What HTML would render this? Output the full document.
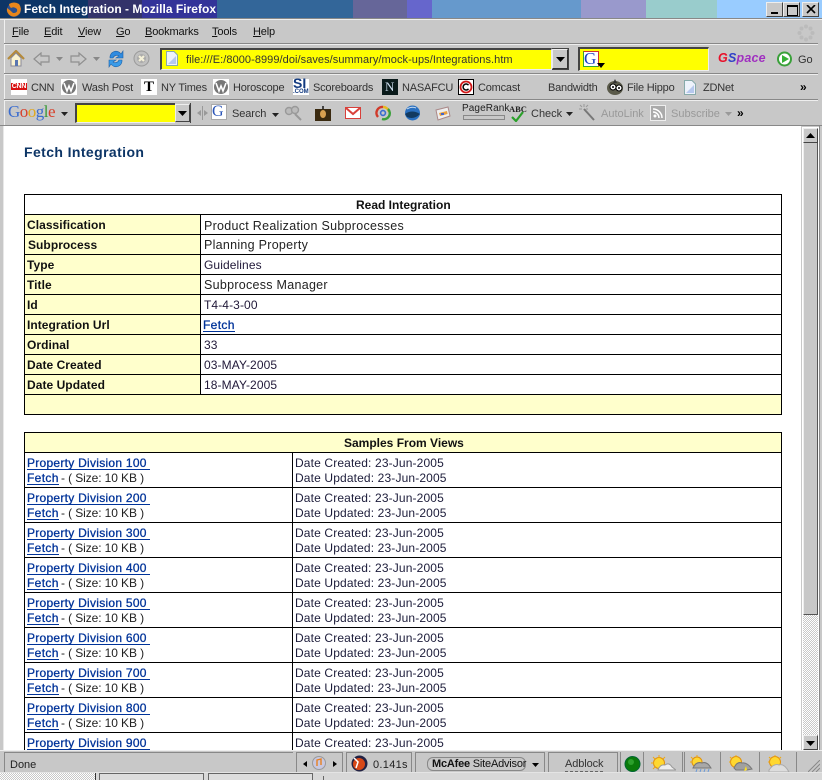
<!DOCTYPE html>
<html><head><meta charset="utf-8"><title>Fetch Integration - Mozilla Firefox</title>
<style>
html,body{margin:0;padding:0;width:822px;height:780px;overflow:hidden;background:#c8c8c8;font-family:"Liberation Sans",sans-serif;font-size:12px;color:#000}
div,svg,a,span.a{position:absolute}
.b{left:0;right:0}
.t{white-space:nowrap;line-height:14px;height:14px}
.m{font-size:11px;color:#111;top:25px;letter-spacing:-.15px}
.bm{top:81px;font-size:11px;color:#333;letter-spacing:-.2px}
.l{position:absolute;background:#000}
.k{font-weight:bold;left:27px;letter-spacing:.05px;color:#111}
.v{left:204px;letter-spacing:.1px;color:#201838}
.v2{font-size:12.5px;letter-spacing:.28px;color:#222}
.c{color:#1c1c3a;left:295px;letter-spacing:.14px}
.d{color:#003399;left:27px;font-weight:normal;letter-spacing:.27px;-webkit-text-stroke:.3px #003399;border-bottom:1px solid #003399;height:13px;line-height:15px}
.f{color:#003399;left:27px;letter-spacing:.35px;-webkit-text-stroke:.3px #003399;border-bottom:1px solid #003399;height:12px;line-height:13px}
.s{left:61px;letter-spacing:-.1px;color:#222}
.sep{background:#888;height:1px;left:4px;right:4px}
.sepw{background:#eee;height:1px;left:4px;right:4px}
.ye{background:#ffff00}
.sb{background:#c8c8c8;border-top:1px solid #eee;border-left:1px solid #eee;border-right:1px solid #444;border-bottom:1px solid #444;box-sizing:border-box}
</style></head><body>
<!-- title bar -->
<div style="left:0;top:0;width:822px;height:18px;background:linear-gradient(90deg,#0d3566 0,#0d3566 88px,#33336a 88px,#33336a 142px,#333399 142px,#333399 217px,#336699 217px,#336699 353px,#666699 353px,#666699 407px,#6666cc 407px,#6666cc 432px,#6699cc 432px,#6699cc 581px,#9999cc 581px,#9999cc 646px,#99cccc 646px,#99cccc 717px,#99ccff 717px)"></div>
<svg style="left:5px;top:1px" width="18" height="17" viewBox="0 0 18 17"><circle cx="9" cy="9" r="7" fill="#2a4f8f"/><path d="M4 3 Q9 0 14 3 Q17 7 15 12 Q11 17 6 15 Q1 12 2 7 Q5 9 8 12 Q13 12 12 8 Q9 5 6 7 Q4 5 4 3Z" fill="#e8861c"/></svg>
<div class="t" style="left:24px;top:2px;color:#fff;font-weight:bold;font-size:12px;letter-spacing:.02px">Fetch Integration - Mozilla Firefox</div>
<div class="sb" style="left:766px;top:2px;width:17px;height:15px"><div style="left:4px;top:9px;width:7px;height:2px;background:#000"></div></div>
<div class="sb" style="left:783px;top:2px;width:17px;height:15px"><div style="left:3px;top:2px;width:9px;height:8px;border:1px solid #000;border-top-width:2px"></div></div>
<div class="sb" style="left:802px;top:2px;width:17px;height:15px"><svg style="left:3px;top:2px" width="10" height="9"><path d="M1 0L9 8M9 0L1 8" stroke="#000" stroke-width="1.6"/></svg></div>
<div style="left:0;top:18px;width:822px;height:1px;background:#888"></div>
<div style="left:0;top:19px;width:822px;height:1px;background:#eee"></div>
<div style="left:4px;top:20px;width:1px;height:106px;background:#f0f0f0"></div>
<!-- menu -->
<div class="t m" style="left:12px"><u>F</u>ile</div>
<div class="t m" style="left:44px"><u>E</u>dit</div>
<div class="t m" style="left:78px"><u>V</u>iew</div>
<div class="t m" style="left:116px"><u>G</u>o</div>
<div class="t m" style="left:145px"><u>B</u>ookmarks</div>
<div class="t m" style="left:212px"><u>T</u>ools</div>
<div class="t m" style="left:253px"><u>H</u>elp</div>
<svg style="left:797px;top:24px" width="18" height="18"><g fill="#bbb"><circle cx="9" cy="2.5" r="2"/><circle cx="9" cy="15.5" r="2"/><circle cx="2.5" cy="9" r="2"/><circle cx="15.5" cy="9" r="2"/><circle cx="4.5" cy="4.5" r="2"/><circle cx="13.5" cy="4.5" r="2"/><circle cx="4.5" cy="13.5" r="2"/><circle cx="13.5" cy="13.5" r="2"/></g></svg>
<div class="sep" style="top:43px"></div><div class="sepw" style="top:44px"></div>
<!-- nav toolbar -->
<svg style="left:7px;top:50px" width="18" height="17"><path d="M1 9L9 1L17 9" fill="none" stroke="#b58a3a" stroke-width="2.2"/><path d="M4 8L9 3L14 8V16H4Z" fill="#fbf3cf" stroke="#8a8a9a"/><rect x="8" y="10" width="3" height="6" fill="#5a76b0"/></svg>
<svg style="left:33px;top:52px" width="17" height="14"><path d="M1 7L8 1V4H16V10H8V13Z" fill="#c8c8c8" stroke="#8f8f8f" stroke-width="1.2"/></svg>
<svg style="left:56px;top:57px" width="7" height="4"><path d="M0 0H7L3.5 4Z" fill="#888"/></svg>
<svg style="left:70px;top:52px" width="17" height="14"><path d="M16 7L9 1V4H1V10H9V13Z" fill="#c8c8c8" stroke="#8f8f8f" stroke-width="1.2"/></svg>
<svg style="left:93px;top:57px" width="7" height="4"><path d="M0 0H7L3.5 4Z" fill="#888"/></svg>
<svg style="left:108px;top:50px" width="16" height="18"><path d="M2 8A6 6 0 0 1 13 4L15 1V8H8L11 6A4 4 0 0 0 5 8Z" fill="#2f8be0" stroke="#1a5fa8" stroke-width=".6"/><path d="M14 10A6 6 0 0 1 3 14L1 17V10H8L5 12A4 4 0 0 0 11 10Z" fill="#3a9be8" stroke="#1a5fa8" stroke-width=".6"/></svg>
<svg style="left:133px;top:50px" width="17" height="17"><circle cx="8.5" cy="8.5" r="7.5" fill="#c0c0c0" stroke="#999"/><circle cx="8.5" cy="8.5" r="4.5" fill="#aaa"/><path d="M6 6L11 11M11 6L6 11" stroke="#f4f0d8" stroke-width="2.2"/></svg>
<div class="ye" style="left:160px;top:48px;width:392px;height:22px;border-top:2px solid #444;border-left:2px solid #444;border-right:1px solid #eee;border-bottom:1px solid #eee;box-sizing:border-box"></div>
<svg style="left:166px;top:51px" width="12" height="15"><path d="M.5 .5H8L11.5 4V14.5H.5Z" fill="#eef2fb" stroke="#8aa"/><path d="M2 13L10 5V13Z" fill="#b6c8ee"/></svg>
<div class="t" style="left:186px;top:53px;color:#333;letter-spacing:.06px;font-size:11px">file:///E:/8000-8999/doi/saves/summary/mock-ups/Integrations.htm</div>
<div class="sb" style="left:552px;top:49px;width:16px;height:20px;border-color:#eee #333 #333 #eee"><svg style="left:3px;top:7px" width="9" height="5"><path d="M0 0H9L4.5 5Z"/></svg></div>
<div style="left:552px;top:48px;width:17px;height:22px;border:1px solid #444;border-left:0;box-sizing:border-box"></div>
<div class="ye" style="left:578px;top:47px;width:131px;height:24px;border-top:2px solid #444;border-left:2px solid #444;border-right:1px solid #eee;border-bottom:1px solid #eee;box-sizing:border-box"></div>
<div style="left:583px;top:51px;width:14px;height:14px;background:#fff;border-top:1px solid #cc3333;border-left:1px solid #33aa33;border-bottom:1px solid #33aa33;border-right:1px solid #cc3333"></div>
<div class="t" style="left:584px;top:51px;height:16px;line-height:16px;font-family:'Liberation Serif',serif;font-size:17px;color:#1a3fc0">G</div>
<svg style="left:597px;top:63px" width="8" height="5"><path d="M0 0H8L4 5Z"/></svg>
<div class="t" style="left:718px;top:51px;font-weight:bold;font-style:italic;font-size:12.5px;letter-spacing:.2px"><span style="color:#e8102a">G</span><span style="color:#3040c8">S</span><span style="color:#a030c0">pace</span></div>
<svg style="left:777px;top:51px" width="15" height="16"><circle cx="7.5" cy="8" r="6.5" fill="#fff" stroke="#3aa03a" stroke-width="2"/><path d="M5 4L12 8L5 12Z" fill="#35b035"/></svg>
<div class="t" style="left:798px;top:53px;color:#333;font-size:11px">Go</div>
<div class="sep" style="top:73px"></div><div class="sepw" style="top:74px"></div>
<!-- bookmarks -->
<svg style="left:11px;top:79px" width="16" height="16"><rect width="16" height="16" fill="#fff"/><rect y="4" width="16" height="7" fill="#d81010"/></svg>
<div class="t bm" style="left:11px;top:80px;font-size:7px;font-weight:bold;color:#fff;width:16px;text-align:center">CNN</div>
<div class="t bm" style="left:31px">CNN</div>
<svg style="left:61px;top:79px" width="16" height="16"><rect width="16" height="16" fill="#fff"/><circle cx="8" cy="8" r="7" fill="#777"/><path d="M3 4L6 12L8 7L10 12L13 4" stroke="#fff" stroke-width="1.6" fill="none"/></svg>
<div class="t bm" style="left:82px">Wash Post</div>
<svg style="left:141px;top:79px" width="16" height="16"><rect width="16" height="16" fill="#fff"/></svg>
<div class="t" style="left:144px;top:79px;height:16px;line-height:16px;font-family:'Liberation Serif',serif;font-weight:bold;font-size:15px">T</div>
<div class="t bm" style="left:161px">NY Times</div>
<svg style="left:213px;top:79px" width="16" height="16"><rect width="16" height="16" fill="#fff"/><circle cx="8" cy="8" r="7" fill="#777"/><path d="M3 4L6 12L8 7L10 12L13 4" stroke="#fff" stroke-width="1.6" fill="none"/></svg>
<div class="t bm" style="left:233px">Horoscope</div>
<div style="left:293px;top:79px;width:16px;height:16px;background:#fff"></div>
<div class="t" style="left:293px;top:77px;font-weight:bold;font-size:14px;color:#123a80;height:13px;line-height:13px">SI</div>
<div class="t" style="left:293px;top:89px;font-weight:bold;font-size:6px;color:#123a80;height:6px;line-height:6px">.COM</div>
<div class="t bm" style="left:313px">Scoreboards</div>
<div style="left:382px;top:79px;width:16px;height:16px;background:#0a1a1a"></div>
<div class="t" style="left:385px;top:80px;color:#cde;font-family:'Liberation Serif',serif;font-size:13px">N</div>
<div class="t bm" style="left:402px">NASAFCU</div>
<div style="left:458px;top:79px;width:16px;height:16px;background:#fff;border:1px solid #000;box-sizing:border-box"></div>
<svg style="left:459px;top:80px" width="14" height="14"><circle cx="7" cy="7" r="5.5" fill="none" stroke="#d01818" stroke-width="1.8"/><path d="M9.5 5.2A3 3 0 1 0 9.5 8.8" fill="none" stroke="#000" stroke-width="1.5"/></svg>
<div class="t bm" style="left:478px">Comcast</div>
<div class="t bm" style="left:548px">Bandwidth</div>
<svg style="left:607px;top:79px" width="17" height="16"><ellipse cx="8" cy="9" rx="8" ry="7" fill="#5a5a4a"/><path d="M8 0L10 4H6Z" fill="#333"/><circle cx="6" cy="8" r="3" fill="#fff" stroke="#000"/><circle cx="12" cy="9" r="3" fill="#fff" stroke="#000"/><circle cx="6" cy="8" r="1"/><circle cx="12" cy="9" r="1"/></svg>
<div class="t bm" style="left:627px">File Hippo</div>
<svg style="left:684px;top:80px" width="12" height="15"><path d="M.5 .5H8L11.5 4V14.5H.5Z" fill="#eef2fb" stroke="#8aa"/><path d="M2 13L10 5V13Z" fill="#b6c8ee"/></svg>
<div class="t bm" style="left:703px">ZDNet</div>
<div class="t" style="left:800px;top:80px;font-weight:bold;font-size:12px">»</div>
<div class="sep" style="top:99px"></div><div class="sepw" style="top:100px"></div>
<!-- google bar -->
<div class="t" style="left:8px;top:103px;height:18px;line-height:18px;font-family:'Liberation Serif',serif;font-size:17px;letter-spacing:-.5px"><span style="color:#3a6ccf">G</span><span style="color:#d8402a">o</span><span style="color:#e0a820">o</span><span style="color:#3a6ccf">g</span><span style="color:#3a9a3a">l</span><span style="color:#d8402a">e</span></div>
<svg style="left:61px;top:112px" width="7" height="4"><path d="M0 0H7L3.5 4Z" fill="#222"/></svg>
<div class="ye" style="left:75px;top:103px;width:100px;height:20px;border-top:2px solid #444;border-left:2px solid #444;border-bottom:1px solid #eee;box-sizing:border-box"></div>
<div class="sb" style="left:175px;top:104px;width:15px;height:18px"><svg style="left:2px;top:6px" width="9" height="5"><path d="M0 0H9L4.5 5Z"/></svg></div>
<div style="left:190px;top:103px;width:1px;height:20px;background:#444"></div>
<svg style="left:197px;top:106px" width="12" height="14"><path d="M5.5 0V14" stroke="#999"/><path d="M0 7L4 4V10ZM11 7L7 4V10Z" fill="#999"/></svg>
<div style="left:211px;top:104px;width:16px;height:16px;background:#fff;border:1px solid #aaa;box-sizing:border-box"></div>
<div class="t" style="left:212px;top:105px;font-family:'Liberation Serif',serif;font-size:16px;color:#2a55b8">G</div>
<div class="t" style="left:232px;top:107px;color:#333;font-size:11px;letter-spacing:-.1px">Search</div>
<svg style="left:272px;top:113px" width="7" height="4"><path d="M0 0H7L3.5 4Z" fill="#222"/></svg>
<svg style="left:284px;top:104px" width="18" height="17"><circle cx="5" cy="7" r="3.5" fill="#bbb" stroke="#999" stroke-width="1.4"/><circle cx="11" cy="6" r="3.5" fill="#bbb" stroke="#999" stroke-width="1.4"/><path d="M11 10L17 16" stroke="#999" stroke-width="2"/></svg>
<svg style="left:315px;top:106px" width="16" height="15"><path d="M7 0H9V3H7Z" fill="#444"/><rect y="3" width="16" height="12" fill="#3a2a10"/><ellipse cx="8" cy="8" rx="3" ry="4" fill="#d8a050"/></svg>
<svg style="left:345px;top:107px" width="16" height="12"><rect x=".5" y=".5" width="15" height="11" fill="#fff" stroke="#d8403a"/><path d="M1 1L8 7L15 1" fill="none" stroke="#d8403a" stroke-width="2"/></svg>
<svg style="left:375px;top:104px" width="16" height="17"><path d="M3 13A6 6 0 0 1 8 3" fill="none" stroke="#d03a2a" stroke-width="2.4"/><path d="M8 3A6 6 0 0 1 14 8" fill="none" stroke="#e8b820" stroke-width="2.4"/><path d="M13 5A6 6 0 0 1 7 15" fill="none" stroke="#3aa03a" stroke-width="2.4"/><circle cx="8" cy="9" r="2.4" fill="none" stroke="#3a6cd0" stroke-width="1.6"/></svg>
<svg style="left:404px;top:105px" width="17" height="16"><circle cx="8.5" cy="8" r="7.5" fill="#2a70c0"/><path d="M1 9Q8 4 16 9Q10 15 3 12Z" fill="#123a60"/><path d="M3 4Q8 1 12 3" stroke="#cde" fill="none"/></svg>
<svg style="left:435px;top:106px" width="16" height="15"><path d="M1 4L13 1L15 10L3 14Z" fill="#eee" stroke="#a88"/><path d="M4 7L12 5L12.6 8L5 10Z" fill="#e8a040"/><path d="M6 7H9V9H6Z" fill="#4466cc"/></svg>
<div class="t" style="left:462px;top:103px;font-size:10px;color:#222;height:12px;line-height:12px;letter-spacing:.1px">PageRank</div>
<div style="left:463px;top:115px;width:40px;height:3px;background:#c8c8c8;border:1px solid #888"></div>
<div class="t" style="left:509px;top:104px;font-family:'Liberation Serif',serif;font-weight:bold;font-size:8.5px;color:#222;height:10px;line-height:10px">ABC</div>
<svg style="left:511px;top:111px" width="13" height="11"><path d="M1 6L5 10L12 1" fill="none" stroke="#2aa02a" stroke-width="2.2"/></svg>
<div class="t" style="left:531px;top:107px;color:#333;font-size:11px">Check</div>
<svg style="left:566px;top:112px" width="7" height="4"><path d="M0 0H7L3.5 4Z" fill="#222"/></svg>
<svg style="left:579px;top:104px" width="16" height="17"><path d="M5 5L15 16" stroke="#777" stroke-width="2"/><path d="M5 0V3M0 5H3M1 1L3 3M9 1L7 3M9 5H7" stroke="#999"/></svg>
<div class="t" style="left:601px;top:107px;color:#999;font-size:11px">AutoLink</div>
<div style="left:650px;top:105px;width:16px;height:16px;background:#aaa;border:1px solid #eee;box-sizing:border-box"></div>
<svg style="left:653px;top:108px" width="10" height="10"><circle cx="2" cy="8" r="1.5" fill="#fff"/><path d="M0 4A6 6 0 0 1 6 10M0 1A9 9 0 0 1 9 10" fill="none" stroke="#fff" stroke-width="1.5"/></svg>
<div class="t" style="left:671px;top:107px;color:#999;font-size:11px">Subscribe</div>
<svg style="left:725px;top:112px" width="7" height="4"><path d="M0 0H7L3.5 4Z" fill="#999"/></svg>
<div class="t" style="left:737px;top:106px;font-weight:bold;font-size:12px">»</div>
<div class="sep" style="top:125px;left:0;right:0"></div>
<!-- page area -->
<div style="left:3px;top:126px;width:798px;height:624px;background:#fff;overflow:hidden">
<div style="left:0;top:0;width:1px;height:624px;background:#e8e8e8"></div>
</div>
<div class="t" style="left:24px;top:145px;color:#0d3566;font-weight:bold;font-size:14px;letter-spacing:.4px">Fetch Integration</div>
<!-- table 1 -->
<div style="left:24px;top:194px;width:758px;height:221px;background:#fff"></div>
<div style="left:25px;top:215px;width:175px;height:179px;background:#ffffcc"></div>
<div style="left:25px;top:395px;width:756px;height:19px;background:#ffffcc"></div>
<div class="l" style="left:24px;top:194px;width:758px;height:1px"></div>
<div class="l" style="left:24px;top:214px;width:758px;height:1px"></div>
<div class="l" style="left:24px;top:234px;width:758px;height:1px"></div>
<div class="l" style="left:24px;top:254px;width:758px;height:1px"></div>
<div class="l" style="left:24px;top:274px;width:758px;height:1px"></div>
<div class="l" style="left:24px;top:294px;width:758px;height:1px"></div>
<div class="l" style="left:24px;top:314px;width:758px;height:1px"></div>
<div class="l" style="left:24px;top:334px;width:758px;height:1px"></div>
<div class="l" style="left:24px;top:354px;width:758px;height:1px"></div>
<div class="l" style="left:24px;top:374px;width:758px;height:1px"></div>
<div class="l" style="left:24px;top:394px;width:758px;height:1px"></div>
<div class="l" style="left:24px;top:414px;width:758px;height:1px"></div>
<div class="l" style="left:24px;top:194px;width:1px;height:221px"></div>
<div class="l" style="left:781px;top:194px;width:1px;height:221px"></div>
<div class="l" style="left:200px;top:214px;width:1px;height:181px"></div>
<div class="t" style="left:356px;top:198px;font-weight:bold;color:#111">Read Integration</div>
<div class="t k" style="top:218px">Classification</div><div class="t v v2" style="top:219px">Product Realization Subprocesses</div>
<div class="t k" style="left:28px;top:238px">Subprocess</div><div class="t v v2" style="top:238px">Planning Property</div>
<div class="t k" style="top:258px">Type</div><div class="t v" style="top:258px">Guidelines</div>
<div class="t k" style="top:278px">Title</div><div class="t v v2" style="top:278px">Subprocess Manager</div>
<div class="t k" style="top:298px">Id</div><div class="t v" style="top:298px">T4-4-3-00</div>
<div class="t k" style="top:318px">Integration Url</div><div class="t f" style="left:203px;top:319px">Fetch</div>
<div class="t k" style="top:338px">Ordinal</div><div class="t v" style="top:338px">33</div>
<div class="t k" style="top:358px">Date Created</div><div class="t v" style="top:358px">03-MAY-2005</div>
<div class="t k" style="top:378px">Date Updated</div><div class="t v" style="top:378px">18-MAY-2005</div>
<!-- table 2 -->
<div style="left:24px;top:432px;width:758px;height:318px;background:#fff"></div>
<div style="left:25px;top:433px;width:756px;height:19px;background:#ffffcc"></div>
<div class="l" style="left:24px;top:432px;width:758px;height:1px"></div>
<div class="l" style="left:24px;top:452px;width:758px;height:1px"></div>
<div class="l" style="left:24px;top:487px;width:758px;height:1px"></div>
<div class="l" style="left:24px;top:522px;width:758px;height:1px"></div>
<div class="l" style="left:24px;top:557px;width:758px;height:1px"></div>
<div class="l" style="left:24px;top:592px;width:758px;height:1px"></div>
<div class="l" style="left:24px;top:627px;width:758px;height:1px"></div>
<div class="l" style="left:24px;top:662px;width:758px;height:1px"></div>
<div class="l" style="left:24px;top:697px;width:758px;height:1px"></div>
<div class="l" style="left:24px;top:732px;width:758px;height:1px"></div>
<div class="l" style="left:24px;top:432px;width:1px;height:318px"></div>
<div class="l" style="left:781px;top:432px;width:1px;height:318px"></div>
<div class="l" style="left:292px;top:452px;width:1px;height:298px"></div>
<div class="t" style="left:344px;top:436px;font-weight:bold;color:#111">Samples From Views</div>

<div class="t d" style="top:456px">Property Division 100&nbsp;</div><div class="t f" style="top:472px">Fetch</div><div class="t s" style="top:471px">- ( Size: 10 KB )</div><div class="t c" style="top:456px">Date Created: 23-Jun-2005</div><div class="t c" style="top:471px">Date Updated: 23-Jun-2005</div>
<div class="t d" style="top:491px">Property Division 200&nbsp;</div><div class="t f" style="top:507px">Fetch</div><div class="t s" style="top:506px">- ( Size: 10 KB )</div><div class="t c" style="top:491px">Date Created: 23-Jun-2005</div><div class="t c" style="top:506px">Date Updated: 23-Jun-2005</div>
<div class="t d" style="top:526px">Property Division 300&nbsp;</div><div class="t f" style="top:542px">Fetch</div><div class="t s" style="top:541px">- ( Size: 10 KB )</div><div class="t c" style="top:526px">Date Created: 23-Jun-2005</div><div class="t c" style="top:541px">Date Updated: 23-Jun-2005</div>
<div class="t d" style="top:561px">Property Division 400&nbsp;</div><div class="t f" style="top:577px">Fetch</div><div class="t s" style="top:576px">- ( Size: 10 KB )</div><div class="t c" style="top:561px">Date Created: 23-Jun-2005</div><div class="t c" style="top:576px">Date Updated: 23-Jun-2005</div>
<div class="t d" style="top:596px">Property Division 500&nbsp;</div><div class="t f" style="top:612px">Fetch</div><div class="t s" style="top:611px">- ( Size: 10 KB )</div><div class="t c" style="top:596px">Date Created: 23-Jun-2005</div><div class="t c" style="top:611px">Date Updated: 23-Jun-2005</div>
<div class="t d" style="top:631px">Property Division 600&nbsp;</div><div class="t f" style="top:647px">Fetch</div><div class="t s" style="top:646px">- ( Size: 10 KB )</div><div class="t c" style="top:631px">Date Created: 23-Jun-2005</div><div class="t c" style="top:646px">Date Updated: 23-Jun-2005</div>
<div class="t d" style="top:666px">Property Division 700&nbsp;</div><div class="t f" style="top:682px">Fetch</div><div class="t s" style="top:681px">- ( Size: 10 KB )</div><div class="t c" style="top:666px">Date Created: 23-Jun-2005</div><div class="t c" style="top:681px">Date Updated: 23-Jun-2005</div>
<div class="t d" style="top:701px">Property Division 800&nbsp;</div><div class="t f" style="top:717px">Fetch</div><div class="t s" style="top:716px">- ( Size: 10 KB )</div><div class="t c" style="top:701px">Date Created: 23-Jun-2005</div><div class="t c" style="top:716px">Date Updated: 23-Jun-2005</div>
<div class="t d" style="top:736px">Property Division 900&nbsp;</div><div class="t c" style="top:736px">Date Created: 23-Jun-2005</div>
<!-- scrollbar -->
<div style="left:802px;top:127px;width:17px;height:623px;background:#fff"></div>
<div style="left:803px;top:128px;width:15px;height:487px;background:#c8c8c8;border:1px solid #eee;border-right-color:#555;border-bottom-color:#555;box-sizing:border-box"></div>
<div style="left:803px;top:615px;width:15px;height:120px;background:repeating-conic-gradient(#c8c8c8 0 25%,#fff 0 50%) 0 0/2px 2px"></div>
<div class="sb" style="left:803px;top:128px;width:15px;height:15px;border-color:#eee #444 #444 #eee"><svg style="left:2px;top:4px" width="9" height="5"><path d="M0 5H9L4.5 0Z"/></svg></div>
<div class="sb" style="left:803px;top:735px;width:15px;height:15px;border-color:#eee #444 #444 #eee"><svg style="left:2px;top:5px" width="9" height="5"><path d="M0 0H9L4.5 5Z"/></svg></div>
<div style="left:819px;top:126px;width:1px;height:624px;background:#888"></div>
<!-- status bar -->
<div style="left:0;top:750px;width:822px;height:22px;background:#c8c8c8;border-top:1px solid #eee;box-sizing:border-box"></div>
<div style="left:4px;top:752px;width:289px;height:20px;border-top:1px solid #888;border-left:1px solid #888;box-sizing:border-box"></div>
<div class="t" style="left:10px;top:758px;color:#222;font-size:11px">Done</div>
<div style="left:296px;top:752px;width:47px;height:20px;border-top:1px solid #888;border-left:1px solid #888;border-right:1px solid #888;box-sizing:border-box"></div>
<svg style="left:303px;top:761px" width="4" height="6"><path d="M4 0V6L0 3Z"/></svg>
<svg style="left:333px;top:761px" width="4" height="6"><path d="M0 0V6L4 3Z"/></svg>
<svg style="left:312px;top:756px" width="14" height="14"><circle cx="7" cy="7" r="6.5" fill="#c8c8e0" stroke="#999"/><path d="M5 10V4L9 3V9" fill="none" stroke="#e88020" stroke-width="1.4"/></svg>
<div style="left:346px;top:752px;width:66px;height:20px;border-top:1px solid #888;border-left:1px solid #888;border-right:1px solid #888;box-sizing:border-box"></div>
<svg style="left:351px;top:755px" width="17" height="17"><circle cx="8.5" cy="8.5" r="8" fill="#224"/><circle cx="8" cy="9" r="6" fill="#d84818"/><path d="M3 3L7 7L5 13" fill="none" stroke="#fff" stroke-width="1.5"/></svg>
<div class="t" style="left:373px;top:758px;color:#222;font-size:11px;letter-spacing:.3px">0.141s</div>
<div style="left:415px;top:752px;width:130px;height:20px;border-top:1px solid #888;border-left:1px solid #888;border-right:1px solid #888;box-sizing:border-box"></div>
<div style="left:427px;top:757px;width:99px;height:14px;border:1px solid #888;border-radius:6px;box-sizing:border-box"></div>
<div class="t" style="left:432px;top:757px;font-size:11px;color:#111;letter-spacing:-.2px"><b>McAfee</b> SiteAdvisor</div>
<svg style="left:532px;top:763px" width="7" height="4"><path d="M0 0H7L3.5 4Z"/></svg>
<div style="left:548px;top:752px;width:70px;height:20px;border-top:1px solid #888;border-left:1px solid #888;border-right:1px solid #888;box-sizing:border-box"></div>
<div class="t" style="left:565px;top:758px;color:#333;font-size:11px;letter-spacing:-.1px;border-bottom:1px dashed #666;height:13px;line-height:13px">Adblock</div>
<div style="left:620px;top:752px;width:1px;height:20px;background:#888"></div>
<svg style="left:624px;top:756px" width="17" height="16"><circle cx="8.5" cy="8" r="7.5" fill="#0a7a0a" stroke="#063"/><circle cx="7" cy="6" r="3" fill="#2ca02c"/></svg>
<div style="left:643px;top:752px;width:1px;height:20px;background:#888"></div>
<svg style="left:650px;top:755px" width="26" height="17"><circle cx="9" cy="8" r="5.5" fill="#ffd830" stroke="#e09010"/><path d="M9 0V3M1 8H4M3 2L5 4M15 2L13 4M3 14L5 12" stroke="#f0a810"/><path d="M8 15Q10 9 15 10Q19 7 22 12L26 15Z" fill="#eee" stroke="#999"/></svg>
<div style="left:682px;top:752px;width:1px;height:20px;background:#888"></div>
<div style="left:684px;top:752px;width:1px;height:20px;background:#888"></div>
<svg style="left:688px;top:755px" width="26" height="17"><circle cx="9" cy="7" r="5" fill="#ffd830" stroke="#e09010"/><path d="M9 0V2M2 7H4M3 2L5 4" stroke="#f0a810"/><path d="M5 13Q8 6 14 8Q19 6 23 13Z" fill="#a8a8a8" stroke="#777"/><path d="M9 14L8 17M13 14L12 17M17 14L16 17M21 14L20 17" stroke="#6a9ad8"/></svg>
<div style="left:720px;top:752px;width:1px;height:20px;background:#888"></div>
<svg style="left:727px;top:755px" width="26" height="17"><circle cx="9" cy="7" r="5.5" fill="#ffd830" stroke="#e09010"/><path d="M9 0V2M2 7H4M3 2L5 4" stroke="#f0a810"/><path d="M7 13Q10 6 15 8Q20 7 25 14L20 15H9Z" fill="#a0a0a0" stroke="#777"/><path d="M19 11L17 16L20 15Z" fill="#ffe020"/></svg>
<div style="left:759px;top:752px;width:1px;height:20px;background:#888"></div>
<svg style="left:766px;top:755px" width="24" height="17"><circle cx="9" cy="7" r="5.5" fill="#ffd830" stroke="#e09010"/><path d="M9 0V2M2 7H4M3 2L5 4M15 2L13 4" stroke="#f0a810"/><path d="M3 17V15Q8 8 13 10Q18 8 23 17Z" fill="#ddd" stroke="#aaa"/></svg>
<div style="left:796px;top:752px;width:1px;height:20px;background:#888"></div>
<svg style="left:808px;top:760px" width="12" height="12"><path d="M0 12L12 0M4 12L12 4M8 12L12 8" stroke="#888"/></svg>
<!-- taskbar edge -->
<div style="left:0;top:772px;width:822px;height:1px;background:#e4e4e4"></div>
<div style="left:0;top:773px;width:822px;height:7px;background:#d8d8d8"></div>
<div style="left:0;top:773px;width:95px;height:7px;background:repeating-conic-gradient(#c8c8c8 0 25%,#fff 0 50%) 0 0/2px 2px;border-right:1px solid #333"></div>
<div style="left:99px;top:773px;width:105px;height:7px;border:1px solid #666;border-bottom:0;box-sizing:border-box;background:#ddd"></div>
<div style="left:208px;top:773px;width:105px;height:7px;border:1px solid #666;border-bottom:0;box-sizing:border-box;background:#ddd"></div>
<div style="left:323px;top:776px;width:1px;height:4px;background:#666"></div>
</body></html>
